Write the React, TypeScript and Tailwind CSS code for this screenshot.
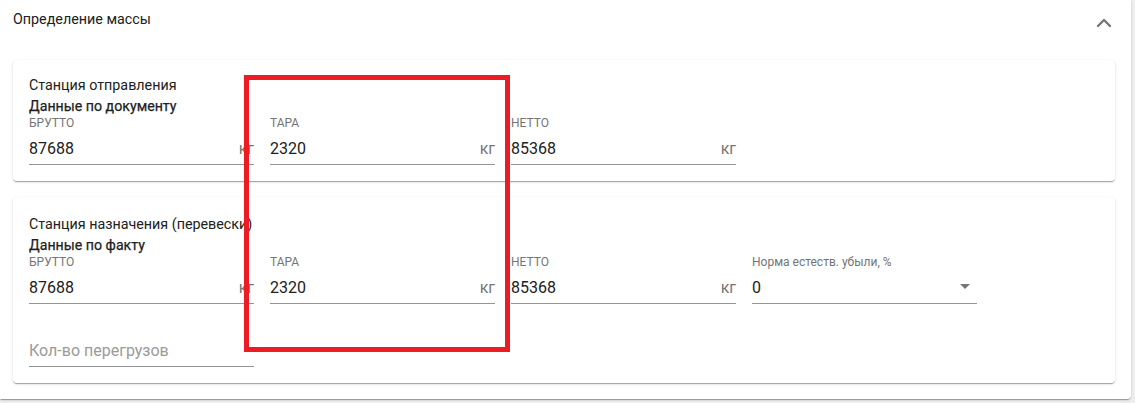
import { ChevronUp } from "lucide-react";

type Field = {
  label: string;
  value: string;
  suffix?: string;
  select?: boolean;
};

const sentFields: Field[] = [
  { label: "БРУТТО", value: "87688", suffix: "кг" },
  { label: "ТАРА", value: "2320", suffix: "кг" },
  { label: "НЕТТО", value: "85368", suffix: "кг" },
];

const arrivedFields: Field[] = [
  ...sentFields,
  { label: "Норма естеств. убыли, %", value: "0", select: true },
];

function ArrowDrop() {
  return (
    <svg viewBox="0 0 24 24" className="absolute right-0 top-[2px] w-[24px] h-[24px] fill-[#757575]">
      <path d="M7 10l5 5 5-5z" />
    </svg>
  );
}

function TextField({ field }: { field: Field }) {
  return (
    <div className="w-[225px] shrink-0">
      <div className="h-[12px] text-[12px] leading-[12px] text-[#757575] whitespace-nowrap">
        {field.label}
      </div>
      <div className="relative mt-[4px] flex items-center pt-[6px] pb-[6px] border-b border-[#949494]">
        <span className="flex-1 text-[16px] leading-[19px] text-[#212121]">{field.value}</span>
        {field.suffix && (
          <span className="text-[16px] leading-[19px] text-[#757575]">{field.suffix}</span>
        )}
        {field.select && <ArrowDrop />}
      </div>
    </div>
  );
}

function StationCard({
  title,
  subtitle,
  fields,
  extra,
  className,
}: {
  title: string;
  subtitle: string;
  fields: Field[];
  extra?: boolean;
  className: string;
}) {
  return (
    <div
      className={
        "bg-white rounded-[4px] px-[16px] pb-[16px] shadow-[0_2px_1px_-1px_rgba(0,0,0,0.2),0_1px_1px_0_rgba(0,0,0,0.14),0_1px_3px_0_rgba(0,0,0,0.12)] " +
        className
      }
    >
      <div className="text-[14.3px] leading-[21px] text-[#212121] whitespace-nowrap">{title}</div>
      <div className="text-[14.2px] leading-[21px] text-[#212121] [-webkit-text-stroke:0.25px_#212121]">
        {subtitle}
      </div>
      <div className="flex gap-[16px]">
        {fields.map((f, i) => (
          <TextField key={i} field={f} />
        ))}
      </div>
      {extra && (
        <div className="w-[225px] mt-[31px] pt-[6px] pb-[6px] border-b border-[#949494] text-[16px] leading-[19px]">
          <span className="text-[#9a9a9a]">Кол-во перегрузов</span>
        </div>
      )}
    </div>
  );
}

export default function App() {
  return (
    <div className="relative w-[1135px] h-[403px] overflow-hidden bg-[#eeeeee] font-['Roboto',sans-serif]">
      <div className="w-[1131px] h-[399px] bg-white rounded-br-[4px] shadow-[0_2px_1px_-1px_rgba(0,0,0,0.2),0_1px_1px_0_rgba(0,0,0,0.14),0_1px_3px_0_rgba(0,0,0,0.12)]">
        {/* header */}
        <div className="h-[38px] flex items-center justify-between pl-[13px] pr-[15px]">
          <span className="text-[14.3px] leading-[20px] text-[#212121]">Определение массы</span>
          <ChevronUp className="w-[24px] h-[24px] text-[#757575] mt-[8px]" strokeWidth={2.4} />
        </div>
        {/* body */}
        <div className="pt-[22px] pl-[13px] pr-[16px] flex flex-col gap-[16px]">
          <StationCard
            title="Станция отправления"
            subtitle="Данные по документу"
            fields={sentFields}
            className="pt-[15px]"
          />
          <StationCard
            title="Станция назначения (перевески)"
            subtitle="Данные по факту"
            fields={arrivedFields}
            extra
            className="pt-[17px]"
          />
        </div>
      </div>
      {/* annotation frame */}
      <div className="absolute left-[244px] top-[75px] w-[266px] h-[277px] border-[5px] border-[#ed1c24]" />
    </div>
  );
}
